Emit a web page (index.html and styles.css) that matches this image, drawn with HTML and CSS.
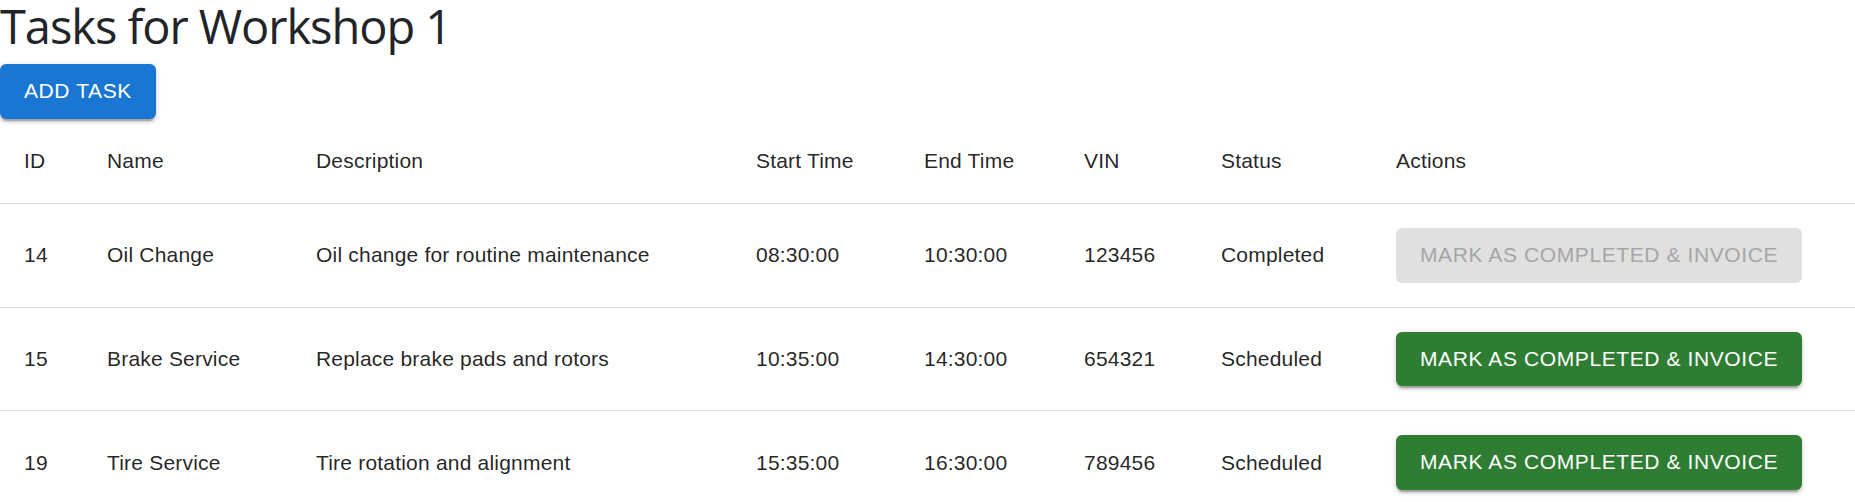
FILE: index.html
```html
<!DOCTYPE html>
<html lang="en">
<head>
<meta charset="utf-8">
<title>Tasks for Workshop 1</title>
<link rel="stylesheet" href="styles.css">
</head>
<body>
<div class="page">
  <h1 class="title">Tasks for Workshop 1</h1>
  <button class="btn btn-primary">ADD TASK</button>
  <table class="tasks">
    <colgroup>
      <col class="c-id"><col class="c-name"><col class="c-desc"><col class="c-start"><col class="c-end"><col class="c-vin"><col class="c-status"><col class="c-actions">
    </colgroup>
    <thead>
      <tr><th>ID</th><th>Name</th><th>Description</th><th>Start Time</th><th>End Time</th><th>VIN</th><th>Status</th><th>Actions</th></tr>
    </thead>
    <tbody>
      <tr><td>14</td><td>Oil Change</td><td>Oil change for routine maintenance</td><td>08:30:00</td><td>10:30:00</td><td>123456</td><td>Completed</td><td><button class="btn btn-disabled" disabled>MARK AS COMPLETED &amp; INVOICE</button></td></tr>
      <tr><td>15</td><td>Brake Service</td><td>Replace brake pads and rotors</td><td>10:35:00</td><td>14:30:00</td><td>654321</td><td>Scheduled</td><td><button class="btn btn-success">MARK AS COMPLETED &amp; INVOICE</button></td></tr>
      <tr><td>19</td><td>Tire Service</td><td>Tire rotation and alignment</td><td>15:35:00</td><td>16:30:00</td><td>789456</td><td>Scheduled</td><td><button class="btn btn-success">MARK AS COMPLETED &amp; INVOICE</button></td></tr>
    </tbody>
  </table>
</div>
</body>
</html>
```
FILE: styles.css
```css
html, body {
  margin: 0;
  padding: 0;
  background: #fff;
}
.page {
  display: flex;
  flex-direction: column;
  align-items: flex-start;
}
.title {
  margin: 0 0 12px 0;
  font-family: "Open Sans", "Noto Sans", sans-serif;
  font-weight: 400;
  font-size: 47px;
  line-height: 52px;
  color: #212529;
  letter-spacing: -1.05px;
}
.btn {
  font-family: "Liberation Sans", Arial, sans-serif;
  font-size: 21px;
  font-weight: 400;
  letter-spacing: 0.6px;
  line-height: 36.75px;
  padding: 9px 24px;
  border: 0;
  border-radius: 6px;
  color: #fff;
  text-transform: uppercase;
  box-shadow: 0 4.5px 1.5px -3px rgba(0,0,0,0.2), 0 3px 3px 0 rgba(0,0,0,0.14), 0 1.5px 7.5px 0 rgba(0,0,0,0.12);
  cursor: pointer;
  white-space: nowrap;
}
.btn-primary { background: #1976d2; }
.btn-success { background: #2e7d32; }
.btn-disabled {
  background: #e0e0e0;
  color: #a6a6a6;
  box-shadow: none;
  cursor: default;
}
.tasks {
  width: 100%;
  border-collapse: collapse;
  table-layout: fixed;
  font-family: "Liberation Sans", Arial, sans-serif;
  font-size: 21px;
  color: rgba(0,0,0,0.87);
}
.c-id { width: 83px; }
.c-name { width: 209px; }
.c-desc { width: 440px; }
.c-start { width: 168px; }
.c-end { width: 160px; }
.c-vin { width: 137px; }
.c-status { width: 175px; }
.tasks th, .tasks td {
  text-align: left;
  padding: 24px;
  border-bottom: 1.5px solid #e0e0e0;
  vertical-align: middle;
  white-space: nowrap;
  letter-spacing: 0.2px;
}
.tasks th {
  font-weight: 400;
  line-height: 36px;
}
.tasks td {
  line-height: 30px;
}
.tasks td .btn {
  letter-spacing: 0.6px;
}
```
